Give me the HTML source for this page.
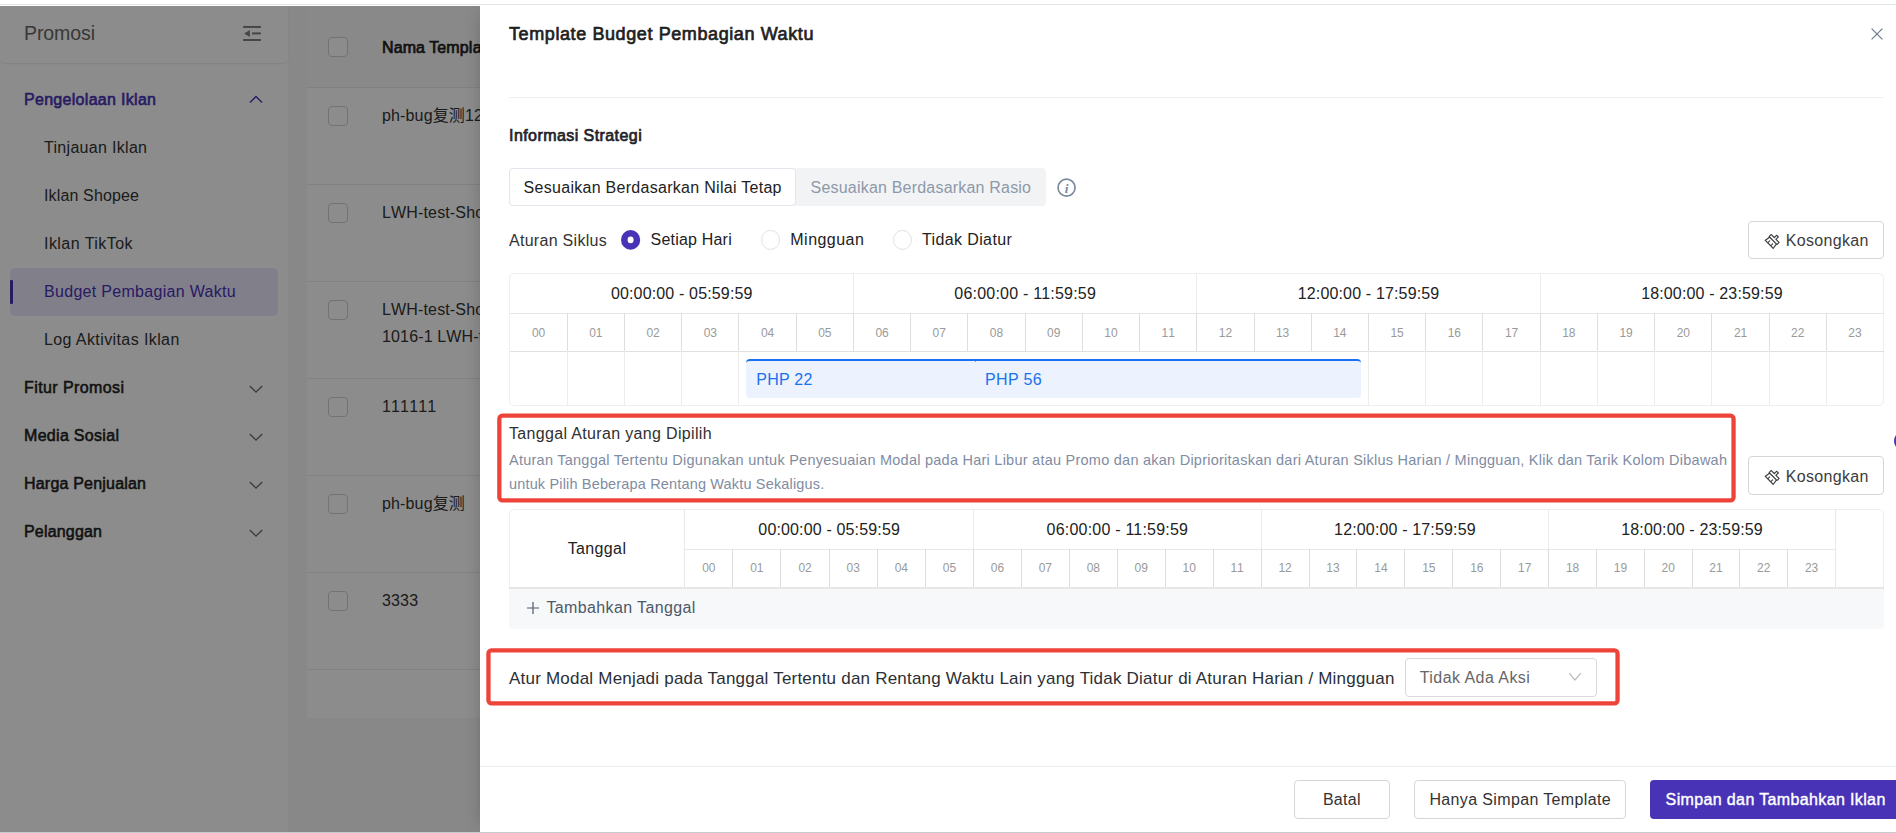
<!DOCTYPE html>
<html lang="id">
<head>
<meta charset="utf-8">
<title>Template Budget Pembagian Waktu</title>
<style>
*{box-sizing:border-box;margin:0;padding:0}
html,body{width:1896px;height:833px;overflow:hidden;background:#fff}
body{position:relative;font-family:"Liberation Sans","Noto Sans CJK SC",sans-serif;font-size:16px;color:#222}
.abs{position:absolute}
.t{position:absolute;white-space:nowrap;line-height:1}
.layer{position:absolute;left:0;top:0;width:1896px;height:833px;overflow:hidden}
</style>
</head>
<body>

<div class="abs" style="left:0.00px;top:4.00px;width:1896.00px;height:1.00px;background:#e2e4e2"></div>
<div class="layer" id="page">
<aside id="sidebar">
<div class="abs" style="left:0.00px;top:6.00px;width:1896.00px;height:826.00px;background:#f7f7f7"></div>
<div class="abs" style="left:0.00px;top:6.00px;width:288.00px;height:826.00px;background:#fff"></div>
<div class="abs" style="left:0.00px;top:6.00px;width:288.00px;height:57.00px;background:#fff;border-radius:0 0 6px 6px;box-shadow:0 1px 2px rgba(0,0,0,.08)"></div>
<span class="t" id="t1" style="top:22.00px;line-height:22px;font-size:19.5px;color:#666;font-weight:400;letter-spacing:-0.089px;left:24.00px;">Promosi</span>
<svg class="abs" style="left:240px;top:22px" width="24" height="22" viewBox="240 22 24 22"><g fill="#808080"><rect x="243.15" y="25.95" width="17.7" height="2"/><rect x="243.15" y="39" width="17.7" height="2"/><rect x="252" y="32.4" width="8.85" height="2"/><path d="M244.1 33.45 L249.9 30 L249.9 36.9 Z"/></g></svg>
<span class="t" id="t2" style="top:91.00px;line-height:17px;font-size:16px;color:#4833b6;font-weight:400;-webkit-text-stroke:0.6px;letter-spacing:0.299px;left:24.00px;">Pengelolaan Iklan</span>
<svg class="abs" style="left:248px;top:93px" width="16" height="12" viewBox="0 0 16 12"><path d="M2 9.6 L8 3.6 L14 9.6" fill="none" stroke="#4833b6" stroke-width="1.4"/></svg>
<span class="t" id="t3" style="top:139.00px;line-height:17px;font-size:16px;color:#333;font-weight:400;letter-spacing:0.305px;left:44.00px;">Tinjauan Iklan</span>
<span class="t" id="t4" style="top:187.00px;line-height:17px;font-size:16px;color:#333;font-weight:400;letter-spacing:0.145px;left:44.00px;">Iklan Shopee</span>
<span class="t" id="t5" style="top:235.00px;line-height:17px;font-size:16px;color:#333;font-weight:400;letter-spacing:0.455px;left:44.00px;">Iklan TikTok</span>
<div class="abs" style="left:10.00px;top:268.40px;width:268.00px;height:47.60px;background:#ebe8fa;border-radius:5px"></div>
<div class="abs" style="left:10.00px;top:280.00px;width:3.00px;height:24.00px;background:#4833b6;border-radius:1px"></div>
<span class="t" id="t6" style="top:283.00px;line-height:17px;font-size:16px;color:#4833b6;font-weight:400;letter-spacing:0.305px;left:44.00px;">Budget Pembagian Waktu</span>
<span class="t" id="t7" style="top:331.00px;line-height:17px;font-size:16px;color:#333;font-weight:400;letter-spacing:0.401px;left:44.00px;">Log Aktivitas Iklan</span>
<span class="t" id="t8" style="top:379.00px;line-height:17px;font-size:16px;color:#222;font-weight:400;-webkit-text-stroke:0.55px;letter-spacing:0.406px;left:24.00px;">Fitur Promosi</span>
<svg class="abs" style="left:248px;top:382.9px" width="16" height="12" viewBox="0 0 16 12"><path d="M1.7 3 L8 9 L14.3 3" fill="none" stroke="#74747c" stroke-width="1.4"/></svg>
<span class="t" id="t9" style="top:427.00px;line-height:17px;font-size:16px;color:#222;font-weight:400;-webkit-text-stroke:0.55px;letter-spacing:0.308px;left:24.00px;">Media Sosial</span>
<svg class="abs" style="left:248px;top:430.9px" width="16" height="12" viewBox="0 0 16 12"><path d="M1.7 3 L8 9 L14.3 3" fill="none" stroke="#74747c" stroke-width="1.4"/></svg>
<span class="t" id="t10" style="top:475.00px;line-height:17px;font-size:16px;color:#222;font-weight:400;-webkit-text-stroke:0.55px;letter-spacing:0.200px;left:24.00px;">Harga Penjualan</span>
<svg class="abs" style="left:248px;top:478.9px" width="16" height="12" viewBox="0 0 16 12"><path d="M1.7 3 L8 9 L14.3 3" fill="none" stroke="#74747c" stroke-width="1.4"/></svg>
<span class="t" id="t11" style="top:523.00px;line-height:17px;font-size:16px;color:#222;font-weight:400;-webkit-text-stroke:0.55px;letter-spacing:0.186px;left:24.00px;">Pelanggan</span>
<svg class="abs" style="left:248px;top:526.9px" width="16" height="12" viewBox="0 0 16 12"><path d="M1.7 3 L8 9 L14.3 3" fill="none" stroke="#74747c" stroke-width="1.4"/></svg>
</aside>
<main id="list">
<div class="abs" style="left:307.00px;top:6.00px;width:1589.00px;height:712.00px;background:#fff"></div>
<div class="abs" style="left:307.00px;top:6.00px;width:1589.00px;height:81.40px;background:#fafafa"></div>
<div class="abs" style="left:307.00px;top:86.90px;width:1589.00px;height:1.00px;background:#ebebeb"></div>
<div class="abs" style="left:307.00px;top:183.90px;width:1589.00px;height:1.00px;background:#ebebeb"></div>
<div class="abs" style="left:307.00px;top:280.90px;width:1589.00px;height:1.00px;background:#ebebeb"></div>
<div class="abs" style="left:307.00px;top:377.90px;width:1589.00px;height:1.00px;background:#ebebeb"></div>
<div class="abs" style="left:307.00px;top:474.90px;width:1589.00px;height:1.00px;background:#ebebeb"></div>
<div class="abs" style="left:307.00px;top:571.90px;width:1589.00px;height:1.00px;background:#ebebeb"></div>
<div class="abs" style="left:307.00px;top:668.90px;width:1589.00px;height:1.00px;background:#ebebeb"></div>
<div class="abs" style="left:328.00px;top:37.00px;width:20.00px;height:20.00px;border:1px solid #ccd1da;border-radius:4px;background:#fff"></div>
<span class="t" id="t12" style="top:39.00px;line-height:17px;font-size:16px;color:#1f1f1f;font-weight:400;-webkit-text-stroke:0.7px;letter-spacing:0.087px;left:382.00px;">Nama Templ</span>
<span class="t" id="t13" style="top:39.00px;line-height:17px;font-size:16px;color:#1f1f1f;font-weight:400;-webkit-text-stroke:0.7px;letter-spacing:0.000px;left:472.80px;">ate</span>
<div class="abs" style="left:328.00px;top:106.40px;width:20.00px;height:20.00px;border:1px solid #ccd1da;border-radius:4px;background:#fff"></div>
<span class="t" id="t14" style="top:107.00px;line-height:17px;font-size:16px;color:#333;font-weight:400;letter-spacing:0.000px;font-kerning:none;letter-spacing:0.15px;left:382.00px;">ph-bug复测1201</span>
<div class="abs" style="left:328.00px;top:203.40px;width:20.00px;height:20.00px;border:1px solid #ccd1da;border-radius:4px;background:#fff"></div>
<span class="t" id="t15" style="top:204.00px;line-height:17px;font-size:16px;color:#333;font-weight:400;letter-spacing:0.000px;font-kerning:none;letter-spacing:0.15px;left:382.00px;">LWH-test-Shopee</span>
<div class="abs" style="left:328.00px;top:300.40px;width:20.00px;height:20.00px;border:1px solid #ccd1da;border-radius:4px;background:#fff"></div>
<span class="t" id="t16" style="top:301.00px;line-height:17px;font-size:16px;color:#333;font-weight:400;letter-spacing:0.000px;font-kerning:none;letter-spacing:0.15px;left:382.00px;">LWH-test-Shopee</span>
<span class="t" id="t17" style="top:328.00px;line-height:17px;font-size:16px;color:#333;font-weight:400;letter-spacing:0.000px;font-kerning:none;letter-spacing:0.15px;left:382.00px;">1016-1 LWH-test</span>
<div class="abs" style="left:328.00px;top:397.40px;width:20.00px;height:20.00px;border:1px solid #ccd1da;border-radius:4px;background:#fff"></div>
<span class="t" id="t18" style="top:398.00px;line-height:17px;font-size:16px;color:#333;font-weight:400;letter-spacing:0.000px;font-kerning:none;letter-spacing:0.15px;left:382.00px;">111111</span>
<div class="abs" style="left:328.00px;top:494.40px;width:20.00px;height:20.00px;border:1px solid #ccd1da;border-radius:4px;background:#fff"></div>
<span class="t" id="t19" style="top:495.00px;line-height:17px;font-size:16px;color:#333;font-weight:400;letter-spacing:0.000px;font-kerning:none;letter-spacing:0.15px;left:382.00px;">ph-bug复测</span>
<div class="abs" style="left:328.00px;top:591.40px;width:20.00px;height:20.00px;border:1px solid #ccd1da;border-radius:4px;background:#fff"></div>
<span class="t" id="t20" style="top:592.00px;line-height:17px;font-size:16px;color:#333;font-weight:400;letter-spacing:0.000px;font-kerning:none;letter-spacing:0.15px;left:382.00px;">3333</span>
</main>
</div>
<div class="abs" style="left:0.00px;top:6.00px;width:1896.00px;height:826.00px;background:rgba(0,0,0,.45)"></div>
<div class="layer" id="drawer" style="top:6px;height:826px"><div class="abs" style="left:0;top:-6px;width:1896px;height:833px">
<div class="abs" style="left:480.00px;top:6.00px;width:1416.00px;height:826.00px;background:#fff;box-shadow:-6px 0 16px -8px rgba(0,0,0,.24)"></div>
<section id="drawer-content">
<span class="t" id="t21" style="top:24.00px;line-height:20px;font-size:18px;color:#1f1f1f;font-weight:400;-webkit-text-stroke:0.7px;letter-spacing:0.597px;left:509.00px;">Template Budget Pembagian Waktu</span>
<svg class="abs" style="left:1870px;top:26.5px" width="14" height="14" viewBox="0 0 14 14"><path d="M1.6 1.6 L12.4 12.4 M12.4 1.6 L1.6 12.4" stroke="#6b7a90" stroke-width="1.2" fill="none"/></svg>
<div class="abs" style="left:509.00px;top:96.60px;width:1375.00px;height:1.00px;background:#f0f0f0"></div>
<span class="t" id="t22" style="top:127.00px;line-height:17px;font-size:16px;color:#1f2329;font-weight:400;-webkit-text-stroke:0.7px;letter-spacing:0.430px;left:509.00px;">Informasi Strategi</span>
<div class="abs" style="left:509.00px;top:168.00px;width:537.00px;height:38.00px;background:#f2f3f5;border-radius:4px"></div>
<div class="abs" style="left:509.00px;top:168.00px;width:287.00px;height:38.00px;background:#fff;border:1px solid #e3e5ec;border-radius:4px"></div>
<span class="t" id="t23" style="top:179.00px;line-height:17px;font-size:16px;color:#222;font-weight:400;letter-spacing:0.286px;left:523.60px;">Sesuaikan Berdasarkan Nilai Tetap</span>
<span class="t" id="t24" style="top:179.00px;line-height:17px;font-size:16px;color:#8d99a9;font-weight:400;letter-spacing:0.199px;left:810.60px;">Sesuaikan Berdasarkan Rasio</span>
<svg class="abs" style="left:1056px;top:177px" width="22" height="22" viewBox="0 0 22 22"><circle cx="10.55" cy="10.65" r="8.5" fill="none" stroke="#7b899c" stroke-width="1.7"/><text x="10.7" y="15.8" text-anchor="middle" font-family="Liberation Serif,serif" font-style="italic" font-weight="700" font-size="13.5" fill="#7b899c">i</text></svg>
<span class="t" id="t25" style="top:232.00px;line-height:17px;font-size:16px;color:#333;font-weight:400;letter-spacing:0.286px;left:509.00px;">Aturan Siklus</span>
<svg class="abs" style="left:615px;top:225px" width="310" height="30" viewBox="615 225 310 30"><ellipse cx="630.6" cy="239.9" rx="6.3" ry="6.6" fill="#fff" stroke="#4833b6" stroke-width="6.6"/><ellipse cx="770.6" cy="239.9" rx="9" ry="9.5" fill="#fff" stroke="#e1e1ea" stroke-width="1"/><ellipse cx="902.5" cy="239.9" rx="9" ry="9.5" fill="#fff" stroke="#e1e1ea" stroke-width="1"/></svg>
<span class="t" id="t26" style="top:231.00px;line-height:17px;font-size:16px;color:#222;font-weight:400;letter-spacing:0.204px;left:650.50px;">Setiap Hari</span>
<span class="t" id="t27" style="top:231.00px;line-height:17px;font-size:16px;color:#222;font-weight:400;letter-spacing:0.474px;left:790.30px;">Mingguan</span>
<span class="t" id="t28" style="top:231.00px;line-height:17px;font-size:16px;color:#222;font-weight:400;letter-spacing:0.377px;left:922.00px;">Tidak Diatur</span>
<div class="abs" style="left:1748.00px;top:221.00px;width:136.00px;height:38.00px;border:1px solid #d6d6d6;border-radius:4px;background:#fff"></div>
<svg class="abs" style="left:1765.5px;top:233.0px;overflow:visible;transform:rotate(45deg)" width="14.6" height="14.6" viewBox="64 64 896 896"><path fill="#3c3c3c" d="M899.1 869.6l-53-305.6H864c14.4 0 26-11.6 26-26V346c0-14.4-11.6-26-26-26H618V138c0-14.4-11.6-26-26-26H432c-14.4 0-26 11.6-26 26v182H160c-14.4 0-26 11.6-26 26v192c0 14.4 11.6 26 26 26h17.900l-53 305.600c-0.300 1.500-0.400 3-0.400 4.400 0 14.400 11.600 26 26 26h723c1.500 0 3-0.100 4.400-0.400 14.200-2.400 23.700-15.900 21.200-30zM204 390h272V182h72v208h272v104H204V390zm468 440V674c0-4.400-3.600-8-8-8h-48c-4.400 0-8 3.600-8 8v156H416V674c0-4.400-3.600-8-8-8h-48c-4.400 0-8 3.600-8 8v156H202.800l45.100-260H776l45.100 260H672z"/></svg>
<span class="t" id="t29" style="top:232.00px;line-height:17px;font-size:16px;color:#3c3c3c;font-weight:400;letter-spacing:0.305px;left:1785.80px;">Kosongkan</span>
<div class="abs" style="left:509.00px;top:272.90px;width:1375.00px;height:133.00px;border:1px solid #efefef;border-radius:5px;background:#fff"></div>
<div class="abs" style="left:510.00px;top:312.90px;width:1373.60px;height:1.00px;background:#e6e6e6"></div>
<div class="abs" style="left:510.00px;top:350.90px;width:1373.60px;height:1.00px;background:#e0e0e0"></div>
<div class="abs" style="left:852.90px;top:273.40px;width:1.00px;height:40.00px;background:#ececec"></div>
<div class="abs" style="left:1196.30px;top:273.40px;width:1.00px;height:40.00px;background:#ececec"></div>
<div class="abs" style="left:1539.70px;top:273.40px;width:1.00px;height:40.00px;background:#ececec"></div>
<span class="t" id="t30" style="top:285.00px;line-height:17px;font-size:16px;color:#222;font-weight:400;letter-spacing:0.151px;left:681.70px;transform:translateX(-50%);margin-left:0.075px;">00:00:00 - 05:59:59</span>
<span class="t" id="t31" style="top:285.00px;line-height:17px;font-size:16px;color:#222;font-weight:400;letter-spacing:0.217px;left:1025.10px;transform:translateX(-50%);margin-left:0.108px;">06:00:00 - 11:59:59</span>
<span class="t" id="t32" style="top:285.00px;line-height:17px;font-size:16px;color:#222;font-weight:400;letter-spacing:0.151px;left:1368.50px;transform:translateX(-50%);margin-left:0.075px;">12:00:00 - 17:59:59</span>
<span class="t" id="t33" style="top:285.00px;line-height:17px;font-size:16px;color:#222;font-weight:400;letter-spacing:0.151px;left:1711.90px;transform:translateX(-50%);margin-left:0.075px;">18:00:00 - 23:59:59</span>
<span class="t" id="t34" style="top:326.00px;line-height:14px;font-size:12px;color:#9a9a9a;font-weight:400;letter-spacing:-0.059px;font-kerning:none;left:538.62px;transform:translateX(-50%);margin-left:-0.029px;">00</span>
<div class="abs" style="left:566.73px;top:313.40px;width:1.00px;height:38.00px;background:#dedede"></div>
<div class="abs" style="left:566.73px;top:351.40px;width:1.00px;height:54.00px;background:#ececec"></div>
<span class="t" id="t35" style="top:326.00px;line-height:14px;font-size:12px;color:#9a9a9a;font-weight:400;letter-spacing:-0.059px;font-kerning:none;left:595.85px;transform:translateX(-50%);margin-left:-0.029px;">01</span>
<div class="abs" style="left:623.97px;top:313.40px;width:1.00px;height:38.00px;background:#dedede"></div>
<div class="abs" style="left:623.97px;top:351.40px;width:1.00px;height:54.00px;background:#ececec"></div>
<span class="t" id="t36" style="top:326.00px;line-height:14px;font-size:12px;color:#9a9a9a;font-weight:400;letter-spacing:-0.059px;font-kerning:none;left:653.08px;transform:translateX(-50%);margin-left:-0.029px;">02</span>
<div class="abs" style="left:681.20px;top:313.40px;width:1.00px;height:38.00px;background:#dedede"></div>
<div class="abs" style="left:681.20px;top:351.40px;width:1.00px;height:54.00px;background:#ececec"></div>
<span class="t" id="t37" style="top:326.00px;line-height:14px;font-size:12px;color:#9a9a9a;font-weight:400;letter-spacing:-0.059px;font-kerning:none;left:710.32px;transform:translateX(-50%);margin-left:-0.029px;">03</span>
<div class="abs" style="left:738.43px;top:313.40px;width:1.00px;height:38.00px;background:#dedede"></div>
<div class="abs" style="left:738.43px;top:351.40px;width:1.00px;height:54.00px;background:#ececec"></div>
<span class="t" id="t38" style="top:326.00px;line-height:14px;font-size:12px;color:#9a9a9a;font-weight:400;letter-spacing:-0.059px;font-kerning:none;left:767.55px;transform:translateX(-50%);margin-left:-0.029px;">04</span>
<div class="abs" style="left:795.67px;top:313.40px;width:1.00px;height:38.00px;background:#dedede"></div>
<span class="t" id="t39" style="top:326.00px;line-height:14px;font-size:12px;color:#9a9a9a;font-weight:400;letter-spacing:-0.059px;font-kerning:none;left:824.78px;transform:translateX(-50%);margin-left:-0.029px;">05</span>
<div class="abs" style="left:852.90px;top:313.40px;width:1.00px;height:38.00px;background:#dedede"></div>
<span class="t" id="t40" style="top:326.00px;line-height:14px;font-size:12px;color:#9a9a9a;font-weight:400;letter-spacing:-0.059px;font-kerning:none;left:882.02px;transform:translateX(-50%);margin-left:-0.029px;">06</span>
<div class="abs" style="left:910.13px;top:313.40px;width:1.00px;height:38.00px;background:#dedede"></div>
<span class="t" id="t41" style="top:326.00px;line-height:14px;font-size:12px;color:#9a9a9a;font-weight:400;letter-spacing:-0.059px;font-kerning:none;left:939.25px;transform:translateX(-50%);margin-left:-0.029px;">07</span>
<div class="abs" style="left:967.37px;top:313.40px;width:1.00px;height:38.00px;background:#dedede"></div>
<span class="t" id="t42" style="top:326.00px;line-height:14px;font-size:12px;color:#9a9a9a;font-weight:400;letter-spacing:-0.059px;font-kerning:none;left:996.48px;transform:translateX(-50%);margin-left:-0.029px;">08</span>
<div class="abs" style="left:1024.60px;top:313.40px;width:1.00px;height:38.00px;background:#dedede"></div>
<span class="t" id="t43" style="top:326.00px;line-height:14px;font-size:12px;color:#9a9a9a;font-weight:400;letter-spacing:-0.059px;font-kerning:none;left:1053.72px;transform:translateX(-50%);margin-left:-0.029px;">09</span>
<div class="abs" style="left:1081.83px;top:313.40px;width:1.00px;height:38.00px;background:#dedede"></div>
<span class="t" id="t44" style="top:326.00px;line-height:14px;font-size:12px;color:#9a9a9a;font-weight:400;letter-spacing:-0.059px;font-kerning:none;left:1110.95px;transform:translateX(-50%);margin-left:-0.029px;">10</span>
<div class="abs" style="left:1139.07px;top:313.40px;width:1.00px;height:38.00px;background:#dedede"></div>
<span class="t" id="t45" style="top:326.00px;line-height:14px;font-size:12px;color:#9a9a9a;font-weight:400;letter-spacing:-0.059px;font-kerning:none;left:1168.18px;transform:translateX(-50%);margin-left:-0.029px;">11</span>
<div class="abs" style="left:1196.30px;top:313.40px;width:1.00px;height:38.00px;background:#dedede"></div>
<span class="t" id="t46" style="top:326.00px;line-height:14px;font-size:12px;color:#9a9a9a;font-weight:400;letter-spacing:-0.059px;font-kerning:none;left:1225.42px;transform:translateX(-50%);margin-left:-0.029px;">12</span>
<div class="abs" style="left:1253.53px;top:313.40px;width:1.00px;height:38.00px;background:#dedede"></div>
<span class="t" id="t47" style="top:326.00px;line-height:14px;font-size:12px;color:#9a9a9a;font-weight:400;letter-spacing:-0.059px;font-kerning:none;left:1282.65px;transform:translateX(-50%);margin-left:-0.029px;">13</span>
<div class="abs" style="left:1310.77px;top:313.40px;width:1.00px;height:38.00px;background:#dedede"></div>
<span class="t" id="t48" style="top:326.00px;line-height:14px;font-size:12px;color:#9a9a9a;font-weight:400;letter-spacing:-0.059px;font-kerning:none;left:1339.88px;transform:translateX(-50%);margin-left:-0.029px;">14</span>
<div class="abs" style="left:1368.00px;top:313.40px;width:1.00px;height:38.00px;background:#dedede"></div>
<div class="abs" style="left:1368.00px;top:351.40px;width:1.00px;height:54.00px;background:#ececec"></div>
<span class="t" id="t49" style="top:326.00px;line-height:14px;font-size:12px;color:#9a9a9a;font-weight:400;letter-spacing:-0.059px;font-kerning:none;left:1397.12px;transform:translateX(-50%);margin-left:-0.029px;">15</span>
<div class="abs" style="left:1425.23px;top:313.40px;width:1.00px;height:38.00px;background:#dedede"></div>
<div class="abs" style="left:1425.23px;top:351.40px;width:1.00px;height:54.00px;background:#ececec"></div>
<span class="t" id="t50" style="top:326.00px;line-height:14px;font-size:12px;color:#9a9a9a;font-weight:400;letter-spacing:-0.059px;font-kerning:none;left:1454.35px;transform:translateX(-50%);margin-left:-0.029px;">16</span>
<div class="abs" style="left:1482.47px;top:313.40px;width:1.00px;height:38.00px;background:#dedede"></div>
<div class="abs" style="left:1482.47px;top:351.40px;width:1.00px;height:54.00px;background:#ececec"></div>
<span class="t" id="t51" style="top:326.00px;line-height:14px;font-size:12px;color:#9a9a9a;font-weight:400;letter-spacing:-0.059px;font-kerning:none;left:1511.58px;transform:translateX(-50%);margin-left:-0.029px;">17</span>
<div class="abs" style="left:1539.70px;top:313.40px;width:1.00px;height:38.00px;background:#dedede"></div>
<div class="abs" style="left:1539.70px;top:351.40px;width:1.00px;height:54.00px;background:#ececec"></div>
<span class="t" id="t52" style="top:326.00px;line-height:14px;font-size:12px;color:#9a9a9a;font-weight:400;letter-spacing:-0.059px;font-kerning:none;left:1568.82px;transform:translateX(-50%);margin-left:-0.029px;">18</span>
<div class="abs" style="left:1596.93px;top:313.40px;width:1.00px;height:38.00px;background:#dedede"></div>
<div class="abs" style="left:1596.93px;top:351.40px;width:1.00px;height:54.00px;background:#ececec"></div>
<span class="t" id="t53" style="top:326.00px;line-height:14px;font-size:12px;color:#9a9a9a;font-weight:400;letter-spacing:-0.059px;font-kerning:none;left:1626.05px;transform:translateX(-50%);margin-left:-0.029px;">19</span>
<div class="abs" style="left:1654.17px;top:313.40px;width:1.00px;height:38.00px;background:#dedede"></div>
<div class="abs" style="left:1654.17px;top:351.40px;width:1.00px;height:54.00px;background:#ececec"></div>
<span class="t" id="t54" style="top:326.00px;line-height:14px;font-size:12px;color:#9a9a9a;font-weight:400;letter-spacing:-0.059px;font-kerning:none;left:1683.28px;transform:translateX(-50%);margin-left:-0.029px;">20</span>
<div class="abs" style="left:1711.40px;top:313.40px;width:1.00px;height:38.00px;background:#dedede"></div>
<div class="abs" style="left:1711.40px;top:351.40px;width:1.00px;height:54.00px;background:#ececec"></div>
<span class="t" id="t55" style="top:326.00px;line-height:14px;font-size:12px;color:#9a9a9a;font-weight:400;letter-spacing:-0.059px;font-kerning:none;left:1740.52px;transform:translateX(-50%);margin-left:-0.029px;">21</span>
<div class="abs" style="left:1768.63px;top:313.40px;width:1.00px;height:38.00px;background:#dedede"></div>
<div class="abs" style="left:1768.63px;top:351.40px;width:1.00px;height:54.00px;background:#ececec"></div>
<span class="t" id="t56" style="top:326.00px;line-height:14px;font-size:12px;color:#9a9a9a;font-weight:400;letter-spacing:-0.059px;font-kerning:none;left:1797.75px;transform:translateX(-50%);margin-left:-0.029px;">22</span>
<div class="abs" style="left:1825.87px;top:313.40px;width:1.00px;height:38.00px;background:#dedede"></div>
<div class="abs" style="left:1825.87px;top:351.40px;width:1.00px;height:54.00px;background:#ececec"></div>
<span class="t" id="t57" style="top:326.00px;line-height:14px;font-size:12px;color:#9a9a9a;font-weight:400;letter-spacing:-0.059px;font-kerning:none;left:1854.98px;transform:translateX(-50%);margin-left:-0.029px;">23</span>
<div class="abs" style="left:746.00px;top:359.00px;width:614.50px;height:38.60px;background:#ecf2fe;border-top:2px solid #1a6ff2;border-radius:4px"></div>
<div class="abs" style="left:974.60px;top:361.00px;width:1.60px;height:1.00px;background:#6aa0f5"></div>
<span class="t" id="t58" style="top:371.00px;line-height:17px;font-size:16px;color:#1b72ee;font-weight:400;letter-spacing:0.228px;left:756.30px;">PHP 22</span>
<span class="t" id="t59" style="top:371.00px;line-height:17px;font-size:16px;color:#1b72ee;font-weight:400;letter-spacing:0.348px;left:985.00px;">PHP 56</span>
<svg class="abs" style="left:490px;top:408px" width="1260" height="100" viewBox="490 408 1260 100"><rect x="499.35" y="415.65" width="1234.2" height="84.7" rx="3" ry="3" fill="none" stroke="#ee4339" stroke-width="4.3"/></svg>
<span class="t" id="t60" style="top:425.00px;line-height:17px;font-size:16px;color:#303030;font-weight:400;letter-spacing:0.334px;left:509.00px;">Tanggal Aturan yang Dipilih</span>
<span class="t" id="t61" style="top:452.00px;line-height:16px;font-size:14.5px;color:#7f8ca2;font-weight:400;letter-spacing:0.246px;left:509.00px;">Aturan Tanggal Tertentu Digunakan untuk Penyesuaian Modal pada Hari Libur atau Promo dan akan Diprioritaskan dari Aturan Siklus Harian / Mingguan, Klik dan Tarik Kolom Dibawah</span>
<span class="t" id="t62" style="top:476.00px;line-height:16px;font-size:14.5px;color:#7f8ca2;font-weight:400;letter-spacing:0.159px;left:509.00px;">untuk Pilih Beberapa Rentang Waktu Sekaligus.</span>
<div class="abs" style="left:1748.00px;top:456.00px;width:136.00px;height:39.00px;border:1px solid #d6d6d6;border-radius:4px;background:#fff"></div>
<svg class="abs" style="left:1765.5px;top:469.0px;overflow:visible;transform:rotate(45deg)" width="14.6" height="14.6" viewBox="64 64 896 896"><path fill="#3c3c3c" d="M899.1 869.6l-53-305.6H864c14.4 0 26-11.6 26-26V346c0-14.4-11.6-26-26-26H618V138c0-14.4-11.6-26-26-26H432c-14.4 0-26 11.6-26 26v182H160c-14.4 0-26 11.6-26 26v192c0 14.4 11.6 26 26 26h17.900l-53 305.600c-0.300 1.500-0.400 3-0.400 4.400 0 14.400 11.600 26 26 26h723c1.500 0 3-0.100 4.400-0.400 14.200-2.400 23.700-15.900 21.200-30zM204 390h272V182h72v208h272v104H204V390zm468 440V674c0-4.400-3.600-8-8-8h-48c-4.400 0-8 3.600-8 8v156H416V674c0-4.400-3.600-8-8-8h-48c-4.400 0-8 3.600-8 8v156H202.800l45.100-260H776l45.100 260H672z"/></svg>
<span class="t" id="t63" style="top:468.00px;line-height:17px;font-size:16px;color:#3c3c3c;font-weight:400;letter-spacing:0.305px;left:1785.80px;">Kosongkan</span>
<div class="abs" style="left:508.90px;top:508.60px;width:1375.60px;height:120.60px;border:1px solid #efefef;border-radius:5px;background:#fff;overflow:hidden"></div>
<div class="abs" style="left:509.40px;top:587.30px;width:1374.60px;height:41.40px;background:#f7f8fa;border-radius:0 0 4px 4px"></div>
<div class="abs" style="left:509.40px;top:587.00px;width:1374.60px;height:2.00px;background:#e6e6e6"></div>
<div class="abs" style="left:684.70px;top:548.90px;width:1150.70px;height:1.00px;background:#e8e8e8"></div>
<div class="abs" style="left:684.20px;top:509.10px;width:1.00px;height:78.20px;background:#e8e8e8"></div>
<div class="abs" style="left:1834.90px;top:509.10px;width:1.00px;height:78.20px;background:#e8e8e8"></div>
<div class="abs" style="left:973.00px;top:509.10px;width:1.00px;height:40.30px;background:#ececec"></div>
<div class="abs" style="left:1260.58px;top:509.10px;width:1.00px;height:40.30px;background:#ececec"></div>
<div class="abs" style="left:1548.17px;top:509.10px;width:1.00px;height:40.30px;background:#ececec"></div>
<span class="t" id="t64" style="top:521.00px;line-height:17px;font-size:16px;color:#222;font-weight:400;letter-spacing:0.151px;left:829.10px;transform:translateX(-50%);margin-left:0.075px;">00:00:00 - 05:59:59</span>
<span class="t" id="t65" style="top:521.00px;line-height:17px;font-size:16px;color:#222;font-weight:400;letter-spacing:0.217px;left:1117.29px;transform:translateX(-50%);margin-left:0.108px;">06:00:00 - 11:59:59</span>
<span class="t" id="t66" style="top:521.00px;line-height:17px;font-size:16px;color:#222;font-weight:400;letter-spacing:0.151px;left:1404.88px;transform:translateX(-50%);margin-left:0.075px;">12:00:00 - 17:59:59</span>
<span class="t" id="t67" style="top:521.00px;line-height:17px;font-size:16px;color:#222;font-weight:400;letter-spacing:0.151px;left:1692.03px;transform:translateX(-50%);margin-left:0.075px;">18:00:00 - 23:59:59</span>
<span class="t" id="t68" style="top:561.00px;line-height:14px;font-size:12px;color:#9a9a9a;font-weight:400;letter-spacing:-0.059px;font-kerning:none;left:708.77px;transform:translateX(-50%);margin-left:-0.029px;">00</span>
<div class="abs" style="left:732.33px;top:549.40px;width:1.00px;height:37.90px;background:#dedede"></div>
<span class="t" id="t69" style="top:561.00px;line-height:14px;font-size:12px;color:#9a9a9a;font-weight:400;letter-spacing:-0.059px;font-kerning:none;left:756.90px;transform:translateX(-50%);margin-left:-0.029px;">01</span>
<div class="abs" style="left:780.47px;top:549.40px;width:1.00px;height:37.90px;background:#dedede"></div>
<span class="t" id="t70" style="top:561.00px;line-height:14px;font-size:12px;color:#9a9a9a;font-weight:400;letter-spacing:-0.059px;font-kerning:none;left:805.03px;transform:translateX(-50%);margin-left:-0.029px;">02</span>
<div class="abs" style="left:828.60px;top:549.40px;width:1.00px;height:37.90px;background:#dedede"></div>
<span class="t" id="t71" style="top:561.00px;line-height:14px;font-size:12px;color:#9a9a9a;font-weight:400;letter-spacing:-0.059px;font-kerning:none;left:853.17px;transform:translateX(-50%);margin-left:-0.029px;">03</span>
<div class="abs" style="left:876.73px;top:549.40px;width:1.00px;height:37.90px;background:#dedede"></div>
<span class="t" id="t72" style="top:561.00px;line-height:14px;font-size:12px;color:#9a9a9a;font-weight:400;letter-spacing:-0.059px;font-kerning:none;left:901.30px;transform:translateX(-50%);margin-left:-0.029px;">04</span>
<div class="abs" style="left:924.87px;top:549.40px;width:1.00px;height:37.90px;background:#dedede"></div>
<span class="t" id="t73" style="top:561.00px;line-height:14px;font-size:12px;color:#9a9a9a;font-weight:400;letter-spacing:-0.059px;font-kerning:none;left:949.43px;transform:translateX(-50%);margin-left:-0.029px;">05</span>
<div class="abs" style="left:973.00px;top:549.40px;width:1.00px;height:37.90px;background:#dedede"></div>
<span class="t" id="t74" style="top:561.00px;line-height:14px;font-size:12px;color:#9a9a9a;font-weight:400;letter-spacing:-0.059px;font-kerning:none;left:997.47px;transform:translateX(-50%);margin-left:-0.029px;">06</span>
<div class="abs" style="left:1020.93px;top:549.40px;width:1.00px;height:37.90px;background:#dedede"></div>
<span class="t" id="t75" style="top:561.00px;line-height:14px;font-size:12px;color:#9a9a9a;font-weight:400;letter-spacing:-0.059px;font-kerning:none;left:1045.40px;transform:translateX(-50%);margin-left:-0.029px;">07</span>
<div class="abs" style="left:1068.86px;top:549.40px;width:1.00px;height:37.90px;background:#dedede"></div>
<span class="t" id="t76" style="top:561.00px;line-height:14px;font-size:12px;color:#9a9a9a;font-weight:400;letter-spacing:-0.059px;font-kerning:none;left:1093.33px;transform:translateX(-50%);margin-left:-0.029px;">08</span>
<div class="abs" style="left:1116.79px;top:549.40px;width:1.00px;height:37.90px;background:#dedede"></div>
<span class="t" id="t77" style="top:561.00px;line-height:14px;font-size:12px;color:#9a9a9a;font-weight:400;letter-spacing:-0.059px;font-kerning:none;left:1141.26px;transform:translateX(-50%);margin-left:-0.029px;">09</span>
<div class="abs" style="left:1164.72px;top:549.40px;width:1.00px;height:37.90px;background:#dedede"></div>
<span class="t" id="t78" style="top:561.00px;line-height:14px;font-size:12px;color:#9a9a9a;font-weight:400;letter-spacing:-0.059px;font-kerning:none;left:1189.19px;transform:translateX(-50%);margin-left:-0.029px;">10</span>
<div class="abs" style="left:1212.65px;top:549.40px;width:1.00px;height:37.90px;background:#dedede"></div>
<span class="t" id="t79" style="top:561.00px;line-height:14px;font-size:12px;color:#9a9a9a;font-weight:400;letter-spacing:-0.059px;font-kerning:none;left:1237.12px;transform:translateX(-50%);margin-left:-0.029px;">11</span>
<div class="abs" style="left:1260.58px;top:549.40px;width:1.00px;height:37.90px;background:#dedede"></div>
<span class="t" id="t80" style="top:561.00px;line-height:14px;font-size:12px;color:#9a9a9a;font-weight:400;letter-spacing:-0.059px;font-kerning:none;left:1285.05px;transform:translateX(-50%);margin-left:-0.029px;">12</span>
<div class="abs" style="left:1308.52px;top:549.40px;width:1.00px;height:37.90px;background:#dedede"></div>
<span class="t" id="t81" style="top:561.00px;line-height:14px;font-size:12px;color:#9a9a9a;font-weight:400;letter-spacing:-0.059px;font-kerning:none;left:1332.98px;transform:translateX(-50%);margin-left:-0.029px;">13</span>
<div class="abs" style="left:1356.45px;top:549.40px;width:1.00px;height:37.90px;background:#dedede"></div>
<span class="t" id="t82" style="top:561.00px;line-height:14px;font-size:12px;color:#9a9a9a;font-weight:400;letter-spacing:-0.059px;font-kerning:none;left:1380.91px;transform:translateX(-50%);margin-left:-0.029px;">14</span>
<div class="abs" style="left:1404.38px;top:549.40px;width:1.00px;height:37.90px;background:#dedede"></div>
<span class="t" id="t83" style="top:561.00px;line-height:14px;font-size:12px;color:#9a9a9a;font-weight:400;letter-spacing:-0.059px;font-kerning:none;left:1428.84px;transform:translateX(-50%);margin-left:-0.029px;">15</span>
<div class="abs" style="left:1452.31px;top:549.40px;width:1.00px;height:37.90px;background:#dedede"></div>
<span class="t" id="t84" style="top:561.00px;line-height:14px;font-size:12px;color:#9a9a9a;font-weight:400;letter-spacing:-0.059px;font-kerning:none;left:1476.77px;transform:translateX(-50%);margin-left:-0.029px;">16</span>
<div class="abs" style="left:1500.24px;top:549.40px;width:1.00px;height:37.90px;background:#dedede"></div>
<span class="t" id="t85" style="top:561.00px;line-height:14px;font-size:12px;color:#9a9a9a;font-weight:400;letter-spacing:-0.059px;font-kerning:none;left:1524.70px;transform:translateX(-50%);margin-left:-0.029px;">17</span>
<div class="abs" style="left:1548.17px;top:549.40px;width:1.00px;height:37.90px;background:#dedede"></div>
<span class="t" id="t86" style="top:561.00px;line-height:14px;font-size:12px;color:#9a9a9a;font-weight:400;letter-spacing:-0.059px;font-kerning:none;left:1572.63px;transform:translateX(-50%);margin-left:-0.029px;">18</span>
<div class="abs" style="left:1596.10px;top:549.40px;width:1.00px;height:37.90px;background:#dedede"></div>
<span class="t" id="t87" style="top:561.00px;line-height:14px;font-size:12px;color:#9a9a9a;font-weight:400;letter-spacing:-0.059px;font-kerning:none;left:1620.48px;transform:translateX(-50%);margin-left:-0.029px;">19</span>
<div class="abs" style="left:1643.86px;top:549.40px;width:1.00px;height:37.90px;background:#dedede"></div>
<span class="t" id="t88" style="top:561.00px;line-height:14px;font-size:12px;color:#9a9a9a;font-weight:400;letter-spacing:-0.059px;font-kerning:none;left:1668.24px;transform:translateX(-50%);margin-left:-0.029px;">20</span>
<div class="abs" style="left:1691.62px;top:549.40px;width:1.00px;height:37.90px;background:#dedede"></div>
<span class="t" id="t89" style="top:561.00px;line-height:14px;font-size:12px;color:#9a9a9a;font-weight:400;letter-spacing:-0.059px;font-kerning:none;left:1716.00px;transform:translateX(-50%);margin-left:-0.029px;">21</span>
<div class="abs" style="left:1739.38px;top:549.40px;width:1.00px;height:37.90px;background:#dedede"></div>
<span class="t" id="t90" style="top:561.00px;line-height:14px;font-size:12px;color:#9a9a9a;font-weight:400;letter-spacing:-0.059px;font-kerning:none;left:1763.76px;transform:translateX(-50%);margin-left:-0.029px;">22</span>
<div class="abs" style="left:1787.14px;top:549.40px;width:1.00px;height:37.90px;background:#dedede"></div>
<span class="t" id="t91" style="top:561.00px;line-height:14px;font-size:12px;color:#9a9a9a;font-weight:400;letter-spacing:-0.059px;font-kerning:none;left:1811.52px;transform:translateX(-50%);margin-left:-0.029px;">23</span>
<span class="t" id="t92" style="top:540.00px;line-height:17px;font-size:16px;color:#222;font-weight:400;letter-spacing:0.376px;left:596.80px;transform:translateX(-50%);margin-left:0.188px;">Tanggal</span>
<svg class="abs" style="left:526px;top:601px" width="14" height="14" viewBox="0 0 14 14"><path d="M7 1 V13 M1 7 H13" stroke="#4e5969" stroke-width="1.2" fill="none"/></svg>
<span class="t" id="t93" style="top:599.00px;line-height:17px;font-size:16px;color:#4e5969;font-weight:400;letter-spacing:0.380px;left:546.40px;">Tambahkan Tanggal</span>
<svg class="abs" style="left:480px;top:642px" width="1150" height="70" viewBox="480 642 1150 70"><rect x="488.45" y="650.45" width="1129.1" height="52.9" rx="3" ry="3" fill="none" stroke="#ee4339" stroke-width="4.3"/></svg>
<span class="t" id="t94" style="top:669.00px;line-height:19px;font-size:17px;color:#2b2f36;font-weight:400;letter-spacing:0.212px;left:509.00px;">Atur Modal Menjadi pada Tanggal Tertentu dan Rentang Waktu Lain yang Tidak Diatur di Aturan Harian / Mingguan</span>
<div class="abs" style="left:1405.00px;top:658.00px;width:192.00px;height:39.00px;border:1px solid #d9d9d9;border-radius:4px;background:#fff"></div>
<span class="t" id="t95" style="top:669.00px;line-height:17px;font-size:16px;color:#666;font-weight:400;letter-spacing:0.449px;left:1419.70px;">Tidak Ada Aksi</span>
<svg class="abs" style="left:1567.2px;top:670.3px" width="16" height="14" viewBox="0 0 16 14"><path d="M2.2 3.2 L8 10 L13.8 3.2" fill="none" stroke="#bababa" stroke-width="1.2"/></svg>
<div class="abs" style="left:480.00px;top:766.00px;width:1416.00px;height:1.00px;background:#ebebf2"></div>
<div class="abs" style="left:1294.00px;top:780.00px;width:96.00px;height:39.00px;border:1px solid #d6d6d6;border-radius:4px;background:#fff"></div>
<span class="t" id="t96" style="top:791.00px;line-height:17px;font-size:16px;color:#333;font-weight:400;letter-spacing:0.308px;left:1322.90px;">Batal</span>
<div class="abs" style="left:1414.00px;top:780.00px;width:212.00px;height:39.00px;border:1px solid #d6d6d6;border-radius:4px;background:#fff"></div>
<span class="t" id="t97" style="top:791.00px;line-height:17px;font-size:16px;color:#333;font-weight:400;letter-spacing:0.363px;left:1429.40px;">Hanya Simpan Template</span>
<div class="abs" style="left:1650.00px;top:780.00px;width:260.00px;height:39.00px;background:#4833b6;border-radius:4px"></div>
<span class="t" id="t98" style="top:791.00px;line-height:17px;font-size:16px;color:#fff;font-weight:400;-webkit-text-stroke:0.4px;letter-spacing:0.367px;left:1665.60px;">Simpan dan Tambahkan Iklan</span>
<div class="abs" style="left:1893.60px;top:430.50px;width:20.00px;height:20.00px;border-radius:50%;background:#4833b6"></div>
</section>
</div></div>
<div class="abs" style="left:0.00px;top:832.00px;width:1896.00px;height:1.00px;background:#c9c9d1"></div>
</body>
</html>
